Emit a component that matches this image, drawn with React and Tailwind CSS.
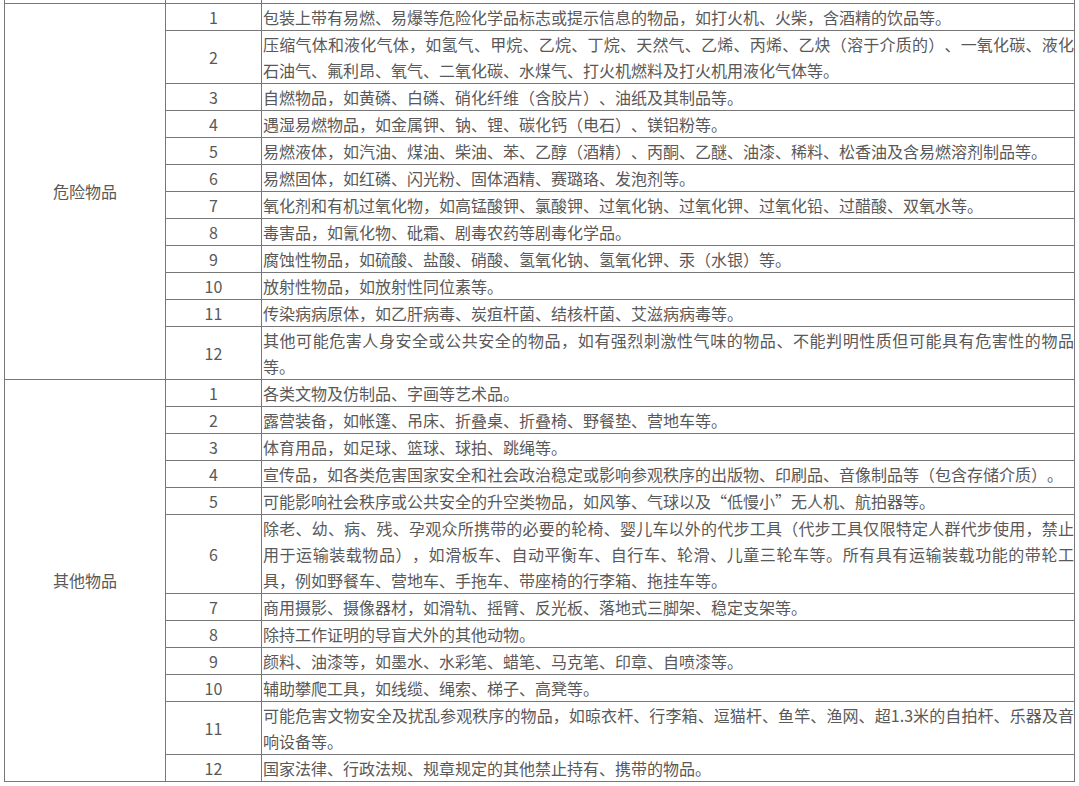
import React from "react";

const danger = [
  "包装上带有易燃、易爆等危险化学品标志或提示信息的物品，如打火机、火柴，含酒精的饮品等。",
  "压缩气体和液化气体，如氢气、甲烷、乙烷、丁烷、天然气、乙烯、丙烯、乙炔（溶于介质的）、一氧化碳、液化石油气、氟利昂、氧气、二氧化碳、水煤气、打火机燃料及打火机用液化气体等。",
  "自燃物品，如黄磷、白磷、硝化纤维（含胶片）、油纸及其制品等。",
  "遇湿易燃物品，如金属钾、钠、锂、碳化钙（电石）、镁铝粉等。",
  "易燃液体，如汽油、煤油、柴油、苯、乙醇（酒精）、丙酮、乙醚、油漆、稀料、松香油及含易燃溶剂制品等。",
  "易燃固体，如红磷、闪光粉、固体酒精、赛璐珞、发泡剂等。",
  "氧化剂和有机过氧化物，如高锰酸钾、氯酸钾、过氧化钠、过氧化钾、过氧化铅、过醋酸、双氧水等。",
  "毒害品，如氰化物、砒霜、剧毒农药等剧毒化学品。",
  "腐蚀性物品，如硫酸、盐酸、硝酸、氢氧化钠、氢氧化钾、汞（水银）等。",
  "放射性物品，如放射性同位素等。",
  "传染病病原体，如乙肝病毒、炭疽杆菌、结核杆菌、艾滋病病毒等。",
  "其他可能危害人身安全或公共安全的物品，如有强烈刺激性气味的物品、不能判明性质但可能具有危害性的物品等。",
];

const other = [
  "各类文物及仿制品、字画等艺术品。",
  "露营装备，如帐篷、吊床、折叠桌、折叠椅、野餐垫、营地车等。",
  "体育用品，如足球、篮球、球拍、跳绳等。",
  "宣传品，如各类危害国家安全和社会政治稳定或影响参观秩序的出版物、印刷品、音像制品等（包含存储介质）。",
  "可能影响社会秩序或公共安全的升空类物品，如风筝、气球以及“低慢小”无人机、航拍器等。",
  "除老、幼、病、残、孕观众所携带的必要的轮椅、婴儿车以外的代步工具（代步工具仅限特定人群代步使用，禁止用于运输装载物品），如滑板车、自动平衡车、自行车、轮滑、儿童三轮车等。所有具有运输装载功能的带轮工具，例如野餐车、营地车、手拖车、带座椅的行李箱、拖挂车等。",
  "商用摄影、摄像器材，如滑轨、摇臂、反光板、落地式三脚架、稳定支架等。",
  "除持工作证明的导盲犬外的其他动物。",
  "颜料、油漆等，如墨水、水彩笔、蜡笔、马克笔、印章、自喷漆等。",
  "辅助攀爬工具，如线缆、绳索、梯子、高凳等。",
  "可能危害文物安全及扰乱参观秩序的物品，如晾衣杆、行李箱、逗猫杆、鱼竿、渔网、超1.3米的自拍杆、乐器及音响设备等。",
  "国家法律、行政法规、规章规定的其他禁止持有、携带的物品。",
];

function Group({ title, items }) {
  return items.map((text, i) => (
    <tr key={i}>
      {i === 0 && (
        <td
          rowSpan={items.length}
          className="border border-[#777777] p-0 text-center align-middle"
        >
          {title}
        </td>
      )}
      <td className="border border-[#777777] p-0 text-center align-middle">
        {i + 1}
      </td>
      <td className="border border-[#777777] py-0 pl-px pr-0 text-justify align-middle">
        {text}
      </td>
    </tr>
  ));
}

export default function App() {
  return (
    <div className="min-h-[786px] w-full bg-white font-['Noto_Sans_CJK_SC','Microsoft_YaHei',sans-serif] text-[16px] leading-[26px] text-[#595959] [text-spacing-trim:space-all]">
      <div className="pl-[4px]">
        <table className="w-[1071px] table-fixed border-collapse">
          <colgroup>
            <col className="w-[161px]" />
            <col className="w-[96px]" />
            <col />
          </colgroup>
          <tbody>
            <tr>
              <td className="h-[3px] border border-t-0 border-[#777777] p-0" />
              <td className="h-[3px] border border-t-0 border-[#777777] p-0" />
              <td className="h-[3px] border border-t-0 border-[#777777] p-0" />
            </tr>
            <Group title="危险物品" items={danger} />
            <Group title="其他物品" items={other} />
          </tbody>
        </table>
      </div>
    </div>
  );
}
